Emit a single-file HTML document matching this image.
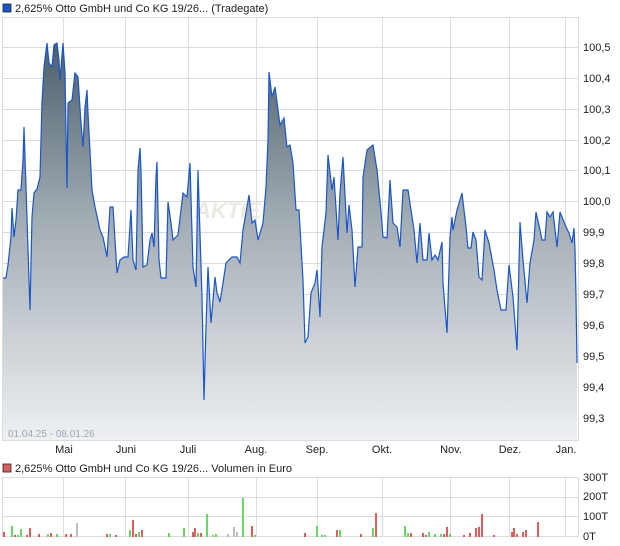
<!DOCTYPE html>
<html><head><meta charset="utf-8"><style>
html,body{margin:0;padding:0;background:#fff;width:620px;height:546px;overflow:hidden}
svg text{font-family:"Liberation Sans",sans-serif;font-size:11px;fill:#222}
</style></head><body>
<svg width="620" height="546" viewBox="0 0 620 546" xmlns="http://www.w3.org/2000/svg">
<defs>
<linearGradient id="g" x1="0" y1="43" x2="0" y2="440" gradientUnits="userSpaceOnUse">
<stop offset="0" stop-color="#4c5f6b"/><stop offset="0.45" stop-color="#a3adb4"/><stop offset="1" stop-color="#eef0f2"/>
</linearGradient>
</defs>
<rect x="3" y="4" width="8" height="8" fill="#1a56c8" stroke="#222" stroke-width="0.8"/>
<text x="15" y="12">2,625% Otto GmbH und Co KG 19/26... (Tradegate)</text>
<g stroke="#dcdcdc" stroke-width="1">
<line x1="3" y1="17.5" x2="578" y2="17.5"/>
<line x1="3" y1="47.5" x2="578" y2="47.5"/><line x1="3" y1="78.5" x2="578" y2="78.5"/><line x1="3" y1="109.5" x2="578" y2="109.5"/><line x1="3" y1="140.5" x2="578" y2="140.5"/><line x1="3" y1="170.5" x2="578" y2="170.5"/><line x1="3" y1="201.5" x2="578" y2="201.5"/><line x1="3" y1="232.5" x2="578" y2="232.5"/><line x1="3" y1="263.5" x2="578" y2="263.5"/><line x1="3" y1="294.5" x2="578" y2="294.5"/><line x1="3" y1="325.5" x2="578" y2="325.5"/><line x1="3" y1="356.5" x2="578" y2="356.5"/><line x1="3" y1="387.5" x2="578" y2="387.5"/><line x1="3" y1="418.5" x2="578" y2="418.5"/>
<line x1="63.5" y1="17" x2="63.5" y2="440"/><line x1="125.5" y1="17" x2="125.5" y2="440"/><line x1="188.5" y1="17" x2="188.5" y2="440"/><line x1="256.5" y1="17" x2="256.5" y2="440"/><line x1="317.5" y1="17" x2="317.5" y2="440"/><line x1="382.5" y1="17" x2="382.5" y2="440"/><line x1="450.5" y1="17" x2="450.5" y2="440"/><line x1="509.5" y1="17" x2="509.5" y2="440"/><line x1="565.5" y1="17" x2="565.5" y2="440"/>
<line x1="578.5" y1="17" x2="578.5" y2="441"/><line x1="2.5" y1="17" x2="2.5" y2="440"/><line x1="2" y1="440.5" x2="579" y2="440.5"/>
</g>
<text x="195" y="218" style="font-size:22px;font-style:italic;font-weight:bold;fill:#ece8e2">AKTIE</text>
<path d="M3,440 L3,278 6,278 8,265 11,237 12,208 14,237 16,220 18,190 21,190 23,160 24,127 26,187 28,250 30,310 32,217 34,193 37,189 40,177 42,102 44,67 47,43 49,63 52,67 54,45 57,43 59,60 60,80 63,43 65,73 67,188 68,103 72,100 75,73 78,77 81,123 83,147 85,107 87,90 88,113 92,190 95,207 100,230 103,237 107,257 110,207 113,207 115,240 117,273 120,260 124,257 128,257 131,210 133,260 136,270 138,170 140,148 141,170 143,267 147,265 150,240 152,233 154,247 156,177 157,162 159,260 161,278 166,278 168,202 171,223 173,240 178,235 183,193 187,197 190,163 193,267 196,287 198,170 202,297 204,400 206,327 208,267 211,323 215,277 217,293 220,302 223,283 226,263 232,257 237,257 240,263 243,230 247,207 249,195 252,223 255,220 258,240 263,223 266,187 268,140 269,72 272,97 275,87 280,125 284,118 287,147 290,145 293,163 296,210 299,210 303,280 305,343 308,337 311,293 315,283 317,270 320,317 322,247 326,213 328,155 332,190 334,177 338,240 340,193 343,157 347,233 349,205 352,230 355,287 358,247 362,247 363,177 367,150 373,145 377,170 381,212 383,237 387,238 390,180 393,223 397,227 400,247 403,190 408,190 414,230 417,263 420,223 423,260 427,260 429,233 432,260 435,255 438,260 442,242 443,283 447,333 450,237 452,217 453,230 457,210 462,193 466,227 468,248 471,248 473,232 476,240 479,277 482,280 485,230 489,243 494,270 497,290 501,310 506,310 509,265 513,297 517,350 520,222 523,260 527,303 530,263 534,240 536,212 540,230 542,240 545,240 547,212 550,217 553,212 557,247 560,212 566,227 569,233 572,243 574,228 575,250 576,297 577,363 L577,440 Z" fill="url(#g)"/>
<polyline fill="none" stroke="#1a56c8" stroke-width="1.2" points="3,278 6,278 8,265 11,237 12,208 14,237 16,220 18,190 21,190 23,160 24,127 26,187 28,250 30,310 32,217 34,193 37,189 40,177 42,102 44,67 47,43 49,63 52,67 54,45 57,43 59,60 60,80 63,43 65,73 67,188 68,103 72,100 75,73 78,77 81,123 83,147 85,107 87,90 88,113 92,190 95,207 100,230 103,237 107,257 110,207 113,207 115,240 117,273 120,260 124,257 128,257 131,210 133,260 136,270 138,170 140,148 141,170 143,267 147,265 150,240 152,233 154,247 156,177 157,162 159,260 161,278 166,278 168,202 171,223 173,240 178,235 183,193 187,197 190,163 193,267 196,287 198,170 202,297 204,400 206,327 208,267 211,323 215,277 217,293 220,302 223,283 226,263 232,257 237,257 240,263 243,230 247,207 249,195 252,223 255,220 258,240 263,223 266,187 268,140 269,72 272,97 275,87 280,125 284,118 287,147 290,145 293,163 296,210 299,210 303,280 305,343 308,337 311,293 315,283 317,270 320,317 322,247 326,213 328,155 332,190 334,177 338,240 340,193 343,157 347,233 349,205 352,230 355,287 358,247 362,247 363,177 367,150 373,145 377,170 381,212 383,237 387,238 390,180 393,223 397,227 400,247 403,190 408,190 414,230 417,263 420,223 423,260 427,260 429,233 432,260 435,255 438,260 442,242 443,283 447,333 450,237 452,217 453,230 457,210 462,193 466,227 468,248 471,248 473,232 476,240 479,277 482,280 485,230 489,243 494,270 497,290 501,310 506,310 509,265 513,297 517,350 520,222 523,260 527,303 530,263 534,240 536,212 540,230 542,240 545,240 547,212 550,217 553,212 557,247 560,212 566,227 569,233 572,243 574,228 575,250 576,297 577,363"/>
<text x="8" y="437" style="font-size:10px;fill:#9aa8b8">01.04.25 - 08.01.26</text>
<g>
<text x="583" y="51">100,5</text><text x="583" y="82">100,4</text><text x="583" y="113">100,3</text><text x="583" y="144">100,2</text><text x="583" y="174">100,1</text><text x="583" y="205">100,0</text><text x="583" y="236">99,9</text><text x="583" y="267">99,8</text><text x="583" y="298">99,7</text><text x="583" y="329">99,6</text><text x="583" y="360">99,5</text><text x="583" y="391">99,4</text><text x="583" y="422">99,3</text>
</g>
<g text-anchor="middle">
<text x="64" y="453">Mai</text><text x="126" y="453">Juni</text><text x="188" y="453">Juli</text><text x="256" y="453">Aug.</text><text x="317" y="453">Sep.</text><text x="382" y="453">Okt.</text><text x="451" y="453">Nov.</text><text x="510" y="453">Dez.</text><text x="566" y="453">Jan.</text>
</g>
<rect x="3" y="464" width="8" height="8" fill="#d9605e" stroke="#222" stroke-width="0.8"/>
<text x="15" y="472">2,625% Otto GmbH und Co KG 19/26... Volumen in Euro</text>
<g stroke="#dcdcdc" stroke-width="1">
<line x1="3" y1="477.5" x2="578" y2="477.5"/><line x1="3" y1="497.5" x2="578" y2="497.5"/><line x1="3" y1="516.5" x2="578" y2="516.5"/><line x1="3" y1="536.5" x2="578" y2="536.5"/>
<line x1="63.5" y1="477" x2="63.5" y2="537"/><line x1="125.5" y1="477" x2="125.5" y2="537"/><line x1="188.5" y1="477" x2="188.5" y2="537"/><line x1="256.5" y1="477" x2="256.5" y2="537"/><line x1="317.5" y1="477" x2="317.5" y2="537"/><line x1="382.5" y1="477" x2="382.5" y2="537"/><line x1="450.5" y1="477" x2="450.5" y2="537"/><line x1="509.5" y1="477" x2="509.5" y2="537"/><line x1="565.5" y1="477" x2="565.5" y2="537"/>
<line x1="578.5" y1="477" x2="578.5" y2="537"/><line x1="2.5" y1="477" x2="2.5" y2="537"/>
</g>
<g fill="#d9605e">
<rect x="3" y="532" width="2" height="5"/><rect x="14" y="535" width="2" height="2"/><rect x="26" y="535" width="2" height="2"/><rect x="29" y="528" width="2" height="9"/><rect x="38" y="534" width="2" height="3"/><rect x="50" y="533" width="2" height="4"/><rect x="65" y="534" width="2" height="3"/><rect x="70" y="534" width="2" height="3"/><rect x="106" y="534" width="2" height="3"/><rect x="115" y="535" width="2" height="2"/><rect x="132" y="520" width="2" height="17"/><rect x="135" y="534" width="2" height="3"/><rect x="141" y="530" width="2" height="7"/><rect x="192" y="532" width="2" height="5"/><rect x="194" y="528" width="2" height="9"/><rect x="200" y="533" width="2" height="4"/><rect x="251" y="526" width="2" height="11"/><rect x="304" y="533" width="2" height="4"/><rect x="336" y="530" width="2" height="7"/><rect x="360" y="534" width="2" height="3"/><rect x="375" y="513" width="2" height="24"/><rect x="410" y="533" width="2" height="4"/><rect x="422" y="533" width="2" height="4"/><rect x="425" y="535" width="2" height="2"/><rect x="443" y="534" width="2" height="3"/><rect x="446" y="527" width="2" height="10"/><rect x="463" y="535" width="2" height="2"/><rect x="469" y="533" width="2" height="4"/><rect x="475" y="528" width="2" height="9"/><rect x="478" y="527" width="2" height="10"/><rect x="481" y="514" width="2" height="23"/><rect x="493" y="535" width="2" height="2"/><rect x="511" y="532" width="2" height="5"/><rect x="513" y="528" width="2" height="9"/><rect x="516" y="534" width="2" height="3"/><rect x="522" y="532" width="2" height="5"/><rect x="525" y="530" width="2" height="7"/><rect x="537" y="522" width="2" height="15"/>
</g>
<g fill="#6ad66a">
<rect x="11" y="526" width="2" height="11"/><rect x="17" y="535" width="2" height="2"/><rect x="20" y="529" width="2" height="8"/><rect x="47" y="534" width="2" height="3"/><rect x="56" y="534" width="2" height="3"/><rect x="109" y="534" width="2" height="3"/><rect x="129" y="530" width="2" height="7"/><rect x="138" y="532" width="2" height="5"/><rect x="168" y="533" width="2" height="4"/><rect x="183" y="528" width="2" height="9"/><rect x="197" y="533" width="2" height="4"/><rect x="206" y="514" width="2" height="23"/><rect x="212" y="535" width="2" height="2"/><rect x="215" y="534" width="2" height="3"/><rect x="242" y="498" width="2" height="39"/><rect x="254" y="535" width="2" height="2"/><rect x="316" y="526" width="2" height="11"/><rect x="321" y="535" width="2" height="2"/><rect x="324" y="535" width="2" height="2"/><rect x="339" y="530" width="2" height="7"/><rect x="372" y="528" width="2" height="9"/><rect x="404" y="526" width="2" height="11"/><rect x="407" y="533" width="2" height="4"/><rect x="428" y="532" width="2" height="5"/><rect x="434" y="534" width="2" height="3"/><rect x="440" y="534" width="2" height="3"/><rect x="449" y="534" width="2" height="3"/>
</g>
<g fill="#bdbdbd">
<rect x="76" y="523" width="2" height="14"/><rect x="227" y="534" width="2" height="3"/><rect x="233" y="527" width="2" height="10"/><rect x="236" y="532" width="2" height="5"/>
</g>
<text x="583" y="481">300T</text><text x="583" y="500">200T</text><text x="583" y="520">100T</text><text x="583" y="540">0T</text>
</svg>
</body></html>
